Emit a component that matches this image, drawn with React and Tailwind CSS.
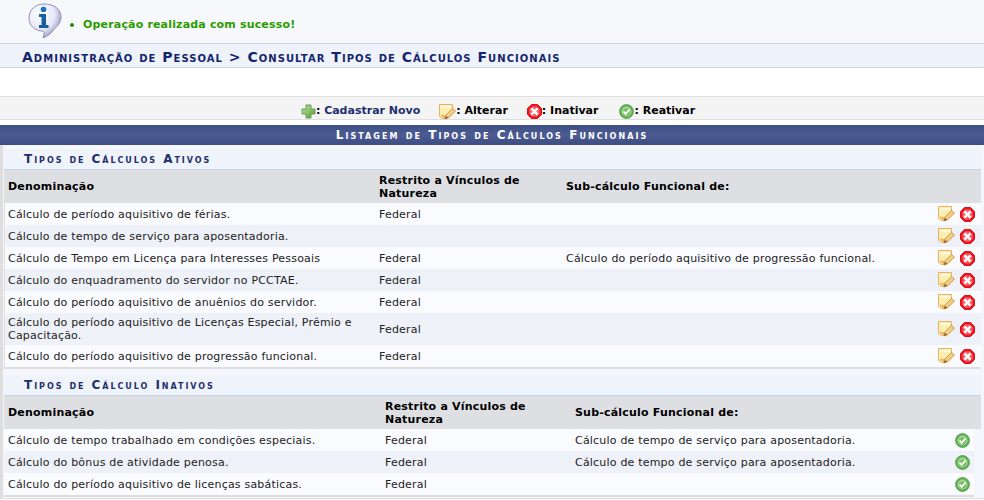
function InfoIcon() {
  return (
    <svg width="34" height="36" viewBox="0 0 34 36" className="shrink-0">
      <defs>
        <radialGradient id="bubble" cx="35%" cy="30%" r="75%">
          <stop offset="0%" stopColor="#ffffff" />
          <stop offset="60%" stopColor="#e6e8f8" />
          <stop offset="100%" stopColor="#8f92c0" />
        </radialGradient>
      </defs>
      <path d="M16 1C7 1 1 7 1 15c0 7 5 12 12 13 2 0 4 1 3 3l-1 4c5-2 9-5 11-9 4-3 7-7 7-12C33 6 26 1 16 1z" fill="url(#bubble)" stroke="#8f92b8" strokeWidth="1" />
      <circle cx="15.500" cy="6.500" r="2.800" fill="#1d6fc0" />
      <path d="M11 11h7v11h2.500v3h-9.500v-3h2.500v-8H11z" fill="#17609f" />
    </svg>
  );
}

function PlusIcon() {
  return (
    <svg width="15" height="15" viewBox="0 0 15 15" className="shrink-0">
      <defs>
        <linearGradient id="plus" x1="0" y1="0" x2="1" y2="1">
          <stop offset="0%" stopColor="#c5e8a0" />
          <stop offset="100%" stopColor="#4f9a2f" />
        </linearGradient>
      </defs>
      <path d="M5 1h5v4h4v5h-4v4H5v-4H1V5h4z" fill="url(#plus)" stroke="#6a9a62" strokeWidth="1" />
    </svg>
  );
}

function EditIcon() {
  return (
    <svg width="17" height="16" viewBox="0 0 17 16" className="shrink-0">
      <path d="M0.500 0.500h13v8l-5 6h-5l-3-2z" fill="#fbeeb0" stroke="#e8b266" strokeWidth="1" />
      <path d="M2 2h10v2H2z" fill="#fff9dc" />
      <path d="M2 12l4 2.500 2-3-6-1z" fill="#efb55c" />
      <path d="M6 15l1-4 6.500-6.500 3 2.500-6.500 6.500z" fill="#f6cf7c" stroke="#c0894a" strokeWidth="0.800" />
      <path d="M6 15l1-3 2 1.500z" fill="#7a5a35" />
    </svg>
  );
}

function RemoveIcon() {
  return (
    <svg width="15" height="15" viewBox="0 0 15 15" className="shrink-0">
      <path d="M4.500 0.500h6l4 4v6l-4 4h-6l-4-4v-6z" fill="#f01722" stroke="#e0101b" strokeWidth="1" />
      <path d="M5.200 2.500h4.600l2.700 2.700v4.600l-2.700 2.700H5.200l-2.700-2.700V5.200z" fill="#f4636a" />
      <path d="M5.200 5.200l4.600 4.600M9.800 5.200l-4.600 4.600" stroke="#ffffff" strokeWidth="2.400" strokeLinecap="square" />
    </svg>
  );
}

function CheckIcon() {
  return (
    <svg width="15" height="15" viewBox="0 0 15 15" className="shrink-0">
      <circle cx="7.500" cy="7.500" r="6.900" fill="#5fae50" stroke="#5aa750" strokeWidth="1" />
      <circle cx="7.500" cy="7.500" r="5" fill="#a4d596" />
      <circle cx="7.500" cy="8" r="3.600" fill="#76bd66" />
      <path d="M4.500 7.500l2.200 2.300 3.800-4.300" fill="none" stroke="#ffffff" strokeWidth="1.800" />
    </svg>
  );
}

const ativos = [
  { nome: 'Cálculo de período aquisitivo de férias.', restrito: 'Federal', sub: '' },
  { nome: 'Cálculo de tempo de serviço para aposentadoria.', restrito: '', sub: '' },
  { nome: 'Cálculo de Tempo em Licença para Interesses Pessoais', restrito: 'Federal', sub: 'Cálculo do período aquisitivo de progressão funcional.' },
  { nome: 'Cálculo do enquadramento do servidor no PCCTAE.', restrito: 'Federal', sub: '' },
  { nome: 'Cálculo do período aquisitivo de anuênios do servidor.', restrito: 'Federal', sub: '' },
  { nome: 'Cálculo do período aquisitivo de Licenças Especial, Prêmio e Capacitação.', restrito: 'Federal', sub: '' },
  { nome: 'Cálculo do período aquisitivo de progressão funcional.', restrito: 'Federal', sub: '' },
];

const inativos = [
  { nome: 'Cálculo de tempo trabalhado em condições especiais.', restrito: 'Federal', sub: 'Cálculo de tempo de serviço para aposentadoria.' },
  { nome: 'Cálculo do bônus de atividade penosa.', restrito: 'Federal', sub: 'Cálculo de tempo de serviço para aposentadoria.' },
  { nome: 'Cálculo do período aquisitivo de licenças sabáticas.', restrito: 'Federal', sub: '' },
];

function Secao({ titulo, rows, inativo }) {
  const colNome = inativo ? 'w-[381px] pl-[4px]' : 'w-[374px] pl-[3px]';
  const colRestrito = inativo ? 'w-[190px]' : 'w-[187px]';
  return (
    <section>
      <h3 className="h-[21px] pl-[20px] leading-[20px] bg-[#eff3fa] border-b border-[#c4d4ea] text-[#222f6b] font-bold text-[12px] tracking-[1.95px] [font-variant:small-caps]">
        {titulo}
      </h3>
      <div className={inativo ? '' : 'border-b-2 border-l border-[#dedede]'}>
        <div className="flex h-[33px] items-center bg-[#dedfe3] font-bold text-black leading-[13px]">
          <div className={colNome}>Denominação</div>
          <div className={colRestrito + ' pr-6'}>Restrito a Vínculos de Natureza</div>
          <div className="flex-1">Sub-cálculo Funcional de:</div>
        </div>
        <div className={inativo ? 'mr-[7px] border-b-2 border-[#dedede]' : ''}>
          {rows.map((row, idx) => (
            <div
              key={row.nome}
              className={`flex items-center leading-[13px] ${row.nome.length > 60 ? 'h-[32px]' : 'h-[22px]'} ${idx % 2 ? 'bg-[#eef1f8]' : 'bg-[#fafbff]'}`}
            >
              <div className={colNome + ' pr-2'}>{row.nome}</div>
              <div className={colRestrito}>{row.restrito}</div>
              <div className="flex-1">{row.sub}</div>
              <div className={inativo ? 'flex w-[19px] items-center' : 'flex items-center gap-[5px] pr-[6px]'}>
                {inativo ? <CheckIcon /> : (<><EditIcon /><RemoveIcon /></>)}
              </div>
            </div>
          ))}
        </div>
      </div>
    </section>
  );
}

export default function App() {
  return (
    <div className="w-[984px] h-[500px] overflow-hidden bg-white text-[11px] tracking-[0.2px] text-[#222] font-['Verdana','DejaVu_Sans',sans-serif]">
      {/* Mensagem */}
      <div className="flex h-[44px] items-start bg-[#f7f8fc] border-b border-[#cdd4e4] pl-[28px] pt-[3px]">
        <InfoIcon />
        <div className="flex items-center gap-[9px] pl-[8px] pt-[15px] text-[#2b9b00] font-bold leading-[14px] tracking-[0.17px]">
          <span className="w-[4px] h-[4px] rounded-full bg-[#2b8a00]" />
          Operação realizada com sucesso!
        </div>
      </div>

      {/* Titulo */}
      <h2 className="h-[24px] pl-[22px] leading-[27px] bg-[#eef3fb] border-b border-[#c8d4e8] text-[#16256b] font-bold text-[14px] tracking-[1.03px] [font-variant:small-caps]">
        Administração de Pessoal &gt; Consultar Tipos de Cálculos Funcionais
      </h2>

      <div className="h-[28px]" />

      {/* Legenda */}
      <div className="flex h-[24px] items-center justify-center gap-[19px] bg-[#f4f4f4] border-y border-[#dfdfdf] pt-[7px] pl-[12px] font-bold text-black tracking-normal">
        <span className="flex items-center"><PlusIcon /><span>:&nbsp;<span className="text-[#1c2f70]">Cadastrar Novo</span></span></span>
        <span className="flex items-center"><EditIcon /><span>:&nbsp;Alterar</span></span>
        <span className="flex items-center"><RemoveIcon /><span>:&nbsp;Inativar</span></span>
        <span className="ml-[2px] flex items-center"><CheckIcon /><span>:&nbsp;Reativar</span></span>
      </div>

      <div className="mt-[5px] h-[20px] leading-[21px] text-center text-white font-bold text-[12px] tracking-[2.05px] [font-variant:small-caps] bg-gradient-to-b from-[#3e4f86] via-[#4c5c92] to-[#3d4d82]">
        Listagem de Tipos de Cálculos Funcionais
      </div>

      <div className="bg-[#f5f6fb] border-l-[3px] border-b border-[#dedede] pl-[1px] pr-[3px] pt-[4px] pb-[1px]">
        <Secao titulo="Tipos de Cálculos Ativos" rows={ativos} />
        <div className="h-[6px]" />
        <Secao titulo="Tipos de Cálculo Inativos" rows={inativos} inativo />
      </div>
    </div>
  );
}
